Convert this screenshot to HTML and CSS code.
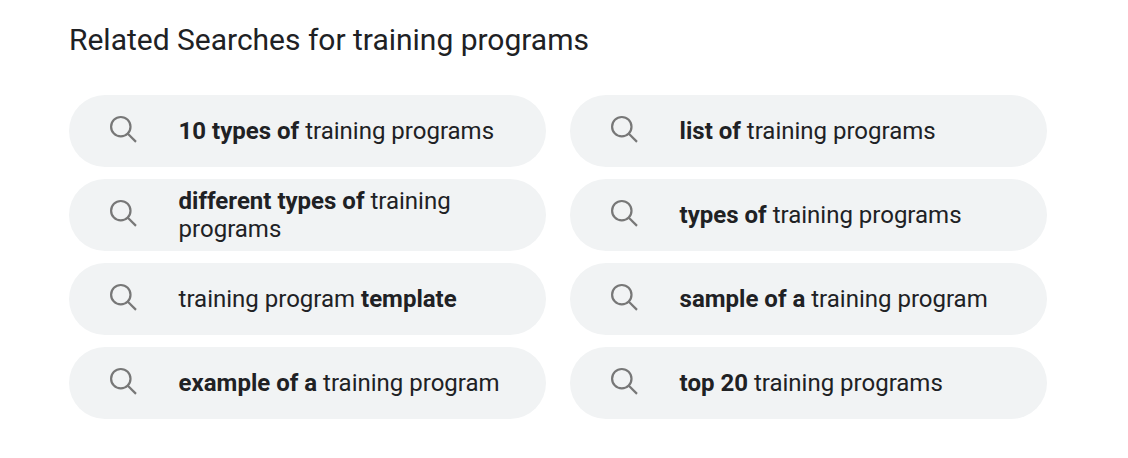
FILE: index.html
```html
<!DOCTYPE html>
<html lang="en">
<head>
<meta charset="utf-8">
<title>Related Searches</title>
<link rel="stylesheet" href="styles.css">
</head>
<body>
<svg class="defs" width="0" height="0"><symbol id="search" viewBox="0 0 28 28"><circle cx="11.8" cy="11.7" r="9.7"/><path d="M18.6 18.5L27 26.9"/></symbol></svg>
<main class="related">
<h2 class="title">Related Searches for training programs</h2>
<div class="grid">
<a class="pill"><svg class="icon"><use href="#search"/></svg><span class="label"><b>10 types of</b> training programs</span></a>
<a class="pill"><svg class="icon"><use href="#search"/></svg><span class="label"><b>list of</b> training programs</span></a>
<a class="pill"><svg class="icon"><use href="#search"/></svg><span class="label"><b>different types of</b> training programs</span></a>
<a class="pill"><svg class="icon"><use href="#search"/></svg><span class="label"><b>types of</b> training programs</span></a>
<a class="pill"><svg class="icon"><use href="#search"/></svg><span class="label">training program <b>template</b></span></a>
<a class="pill"><svg class="icon"><use href="#search"/></svg><span class="label"><b>sample of a</b> training program</span></a>
<a class="pill"><svg class="icon"><use href="#search"/></svg><span class="label"><b>example of a</b> training program</span></a>
<a class="pill"><svg class="icon"><use href="#search"/></svg><span class="label"><b>top 20</b> training programs</span></a>
</div>
</main>
</body>
</html>
```
FILE: styles.css
```css
body { margin: 0; background: #fff; color: #202124; font-family: Roboto, sans-serif; }
.defs { display: block; }
.related { padding: 20px 81px 0 69px; }
.title { margin: 0 0 35px; font-size: 30px; line-height: 40px; font-weight: 400; letter-spacing: -0.01px; }
.grid { display: grid; grid-template-columns: 477px 477px; gap: 12px 24px; }
.pill { display: flex; align-items: center; box-sizing: border-box; height: 72px; padding: 0 40px; border-radius: 36px; background: #f1f3f4; }
.icon { flex: none; width: 28px; height: 28px; margin: 0 41.6px 4px 0; fill: none; stroke: #777; stroke-width: 2.2; }
.label { font-size: 24px; line-height: 28px; }
.label b { font-weight: 700; }
```
